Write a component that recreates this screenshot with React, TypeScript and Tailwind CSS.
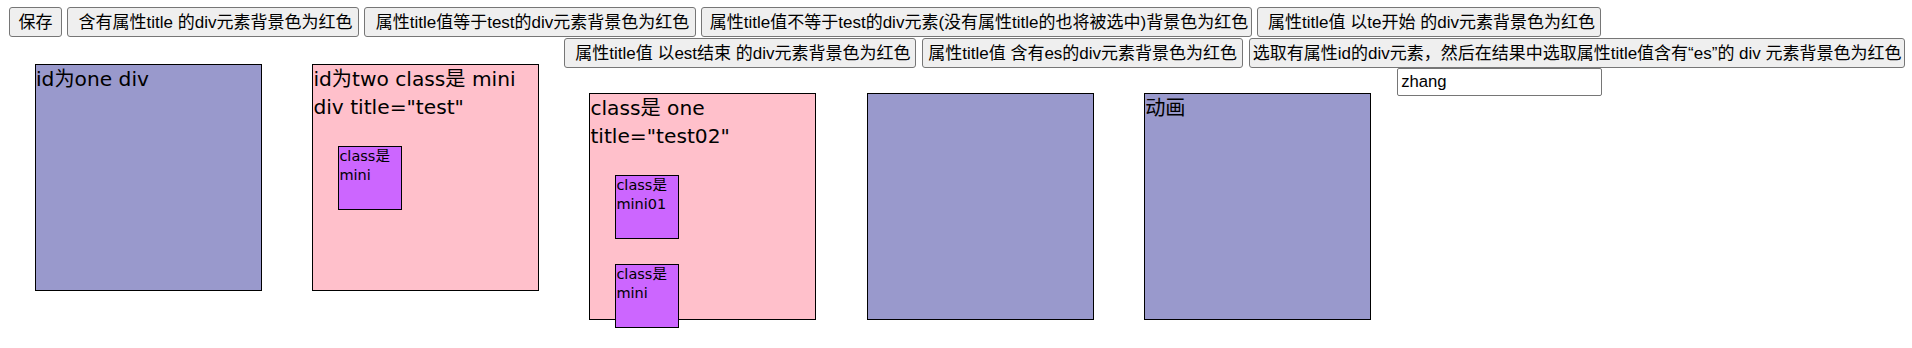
import React from "react";

const btnBase =
  "h-[30px] shrink-0 flex items-center justify-center whitespace-nowrap rounded-[3px] border border-[#767676] bg-[#efefef] text-black text-[17px] leading-none font-['Liberation_Sans','Noto_Sans_CJK_SC',sans-serif]";

const boxBase =
  "shrink-0 w-[227px] h-[227px] border border-black text-black text-[20.2px] leading-[28px] font-['DejaVu_Sans','Noto_Sans_CJK_SC',sans-serif]";

const miniBase =
  "w-[64px] h-[64px] ml-[25px] mt-[25px] border border-black bg-[#cc66ff] text-[14.5px] leading-[19px] break-all";

export default function App() {
  return (
    <div className="w-[1912px] h-[348px] overflow-hidden bg-white">
      {/* Row 1 buttons */}
      <div className="flex pt-[7px] pl-[9px]">
        <button className={`${btnBase} w-[53px]`}>保存</button>
        <button className={`${btnBase} w-[292px] ml-[5px] pl-[5px]`}>含有属性title 的div元素背景色为红色</button>
        <button className={`${btnBase} w-[332px] ml-[5px] pl-[5px]`}>属性title值等于test的div元素背景色为红色</button>
        <button className={`${btnBase} w-[551px] ml-[5px] pl-[5px]`}>属性title值不等于test的div元素(没有属性title的也将被选中)背景色为红色</button>
        <button className={`${btnBase} w-[344px] ml-[5px] pl-[5px]`}>属性title值 以te开始 的div元素背景色为红色</button>
      </div>

      <div className="flex items-start mt-[1px]">
        {/* Column A: boxes one and two */}
        <div className="flex items-start pl-[35px] gap-[50.4px]">
          <div className={`${boxBase} mt-[25.8px] bg-[#9999cc]`}>id为one div</div>
          <div className={`${boxBase} mt-[25.8px] bg-[#ffc0cb]`}>
            <div>id为two class是 mini div title="test"</div>
            <div className={miniBase}>class是 mini</div>
          </div>
        </div>

        {/* Column B */}
        <div className="flex flex-col ml-[25px]">
          <div className="flex">
            <button className={`${btnBase} w-[352px] pl-[5px]`}>属性title值 以est结束 的div元素背景色为红色</button>
            <button className={`${btnBase} w-[321.5px] ml-[5.5px]`}>属性title值 含有es的div元素背景色为红色</button>
            <button className={`${btnBase} w-[655.5px] ml-[6px]`}>选取有属性id的div元素，然后在结果中选取属性title值含有“es”的 div 元素背景色为红色</button>
          </div>
          <div className="flex items-start">
            <div className="flex items-start pl-[25px] gap-[50.4px]">
              <div className={`${boxBase} mt-[25.3px] bg-[#ffc0cb]`}>
                <div>class是 one title="test02"</div>
                <div className={miniBase}>class是 mini01</div>
                <div className={miniBase}>class是 mini</div>
              </div>
              <div className={`${boxBase} mt-[25.3px] bg-[#9999cc]`}></div>
              <div className={`${boxBase} mt-[25.3px] bg-[#9999cc]`}>动画</div>
            </div>
            <input
              type="text"
              defaultValue="zhang"
              className="ml-[26px] w-[205px] h-[27.5px] shrink-0 rounded-[2px] border border-[#767676] bg-white px-[3px] text-[16.7px] text-black font-['Liberation_Sans',sans-serif] outline-none"
            />
          </div>
        </div>
      </div>
    </div>
  );
}
